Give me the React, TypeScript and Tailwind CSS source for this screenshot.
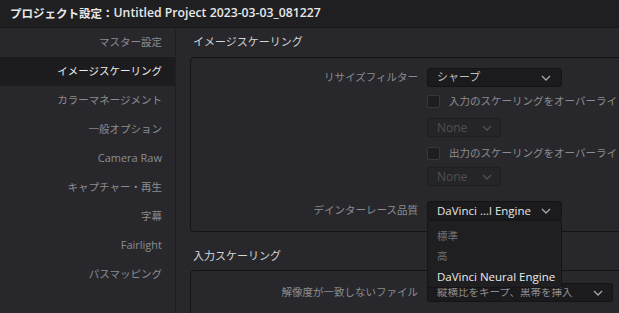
const sidebarItems = [
  'マスター設定',
  'イメージスケーリング',
  'カラーマネージメント',
  '一般オプション',
  'Camera Raw',
  'キャプチャー・再生',
  '字幕',
  'Fairlight',
  'パスマッピング',
];

function Chevron({ className }: { className?: string }) {
  return (
    <svg width="10" height="6" viewBox="0 0 10 6" className={className}>
      <polyline points="1,1 5,5 9,1" fill="none" stroke="currentColor" strokeWidth="1.3" />
    </svg>
  );
}

function Checkbox() {
  return <div className="w-[13px] h-[13px] rounded-[2px] bg-[#1e1e20] border border-[#38383b]" />;
}

function Row({ label, children, className }: { label?: string; children: React.ReactNode; className?: string }) {
  return (
    <div className={`flex items-center h-[19px] shrink-0 ${className ?? ''}`}>
      <div className="w-[227px] shrink-0 text-right text-[10.5px] text-[#8c8c90] whitespace-nowrap">{label}</div>
      <div className="ml-[9px] flex items-center relative">{children}</div>
    </div>
  );
}

export default function App() {
  return (
    <div className="w-[619px] h-[313px] overflow-hidden bg-[#28282c] flex flex-col font-['Open_Sans','Noto_Sans_CJK_JP',sans-serif]">
      {/* Title bar */}
      <div className="h-[28px] shrink-0 bg-[#1f1f22] border-b border-[#161618] flex items-center pl-[10px] text-[#e8e8e8] font-semibold whitespace-nowrap">
        <span className="text-[11.5px]">プロジェクト設定：</span>
        <span className="text-[12.25px]">Untitled Project 2023-03-03_081227</span>
      </div>

      <div className="flex flex-1 min-h-0">
        {/* Sidebar */}
        <aside className="w-[176px] shrink-0 border-r border-[#1f1f22] flex flex-col">
          {sidebarItems.map((item, i) => (
            <div
              key={item}
              className={`h-[29px] shrink-0 flex items-center justify-end pr-[13px] whitespace-nowrap ${
                /[A-Za-z]/.test(item) ? 'text-[11px]' : 'text-[10.5px]'
              } ${i === 1 ? 'bg-[#1c1c1e] text-[#ececec]' : 'text-[#8c8c90]'}`}
            >
              {item}
            </div>
          ))}
        </aside>

        {/* Main */}
        <main className="flex-1 min-w-0 overflow-hidden pl-[14px] flex flex-col">
          <div className="h-[29px] shrink-0 flex items-center pl-[3px] text-[11px] text-[#d6d6d6] whitespace-nowrap">
            イメージスケーリング
          </div>

          <div className="w-[470px] h-[175px] shrink-0 border border-[#141416] rounded-[4px] flex flex-col relative z-10">
            <Row label="リサイズフィルター" className="mt-[10px]">
              <div className="w-[135px] h-[19px] rounded-[3px] bg-[#1b1b1d] border border-[#141416] flex items-center justify-between pl-[9px] pr-[10px] text-[11px] text-[#bdbdbd]">
                <span>シャープ</span>
                <Chevron className="text-[#a8a8a8]" />
              </div>
            </Row>
            <Row className="mt-[5px]">
              <Checkbox />
              <span className="ml-[9px] text-[10.5px] text-[#8c8c90] whitespace-nowrap">入力のスケーリングをオーバーライド</span>
            </Row>
            <Row className="mt-[7px]">
              <div className="w-[74px] h-[19px] rounded-[3px] bg-[#252528] border border-[#1f1f22] flex items-center justify-between pl-[9px] pr-[8px] text-[12px] text-[#4f4f54]">
                <span>None</span>
                <Chevron />
              </div>
            </Row>
            <Row className="mt-[7px]">
              <Checkbox />
              <span className="ml-[9px] text-[10.5px] text-[#8c8c90] whitespace-nowrap">出力のスケーリングをオーバーライド</span>
            </Row>
            <Row className="mt-[4px]">
              <div className="w-[74px] h-[19px] rounded-[3px] bg-[#252528] border border-[#1f1f22] flex items-center justify-between pl-[9px] pr-[8px] text-[12px] text-[#4f4f54]">
                <span>None</span>
                <Chevron />
              </div>
            </Row>
            <Row label="デインターレース品質" className="mt-[15px]">
              <div className="w-[135px] h-[19px] rounded-[3px] bg-[#1b1b1d] border border-[#141416] flex items-center justify-between pl-[9px] pr-[10px] text-[11.5px] text-[#e6e6e6] whitespace-nowrap">
                <span>DaVinci ...l Engine</span>
                <Chevron className="text-[#a8a8a8]" />
              </div>
              {/* Open menu */}
              <div className="absolute left-0 top-[19px] w-[135px] h-[68px] bg-[#1f1f22] border border-[#151517] rounded-b-[3px] pt-[6px] flex flex-col text-[11.5px] whitespace-nowrap">
                <div className="h-[20px] flex items-center pl-[9px] text-[10.5px] text-[#707075]">標準</div>
                <div className="h-[20px] flex items-center pl-[9px] text-[10.5px] text-[#707075]">高</div>
                <div className="h-[20px] flex items-center pl-[9px] text-[#ececec]">DaVinci Neural Engine</div>
              </div>
            </Row>
          </div>

          <div className="h-[28px] mt-[10px] shrink-0 flex items-center pl-[3px] text-[11px] text-[#d6d6d6] whitespace-nowrap">
            入力スケーリング
          </div>

          <div className="w-[470px] h-[60px] shrink-0 border border-[#141416] rounded-[4px] flex flex-col">
            <Row label="解像度が一致しないファイル" className="mt-[12px]">
              <div className="w-[186px] h-[19px] rounded-[3px] bg-[#1b1b1d] border border-[#141416] flex items-center justify-between pl-[9px] pr-[9px] text-[10.5px] text-[#8c8c90] whitespace-nowrap">
                <span>縦横比をキープ、黒帯を挿入</span>
                <Chevron className="text-[#a8a8a8]" />
              </div>
            </Row>
          </div>
        </main>
      </div>
    </div>
  );
}
